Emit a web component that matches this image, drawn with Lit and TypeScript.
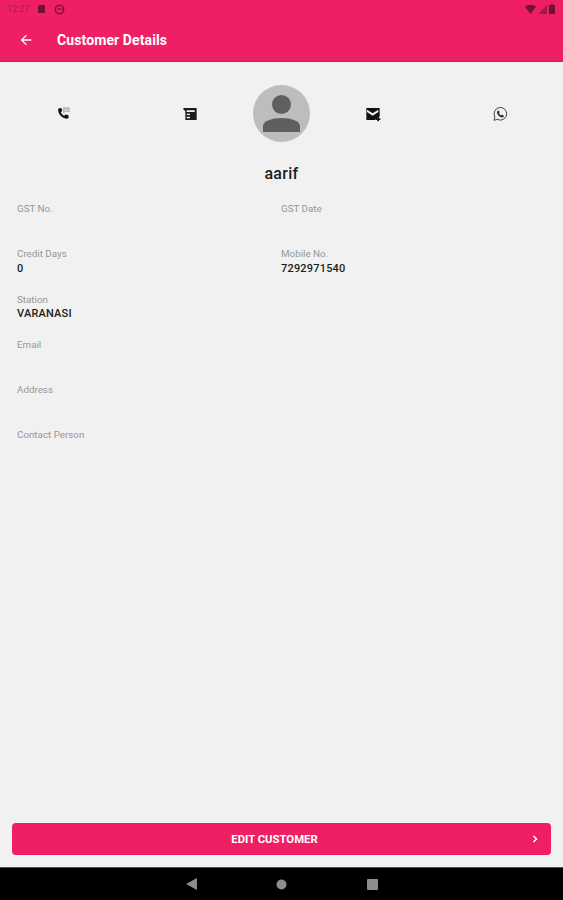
import { LitElement, html, css, svg } from "lit";
import { customElement } from "lit/decorators.js";

const fields = [
  { label: "GST No.", value: "" },
  { label: "GST Date", value: "" },
  { label: "Credit Days", value: "0" },
  { label: "Mobile No.", value: "7292971540" },
  { label: "Station", value: "VARANASI", full: true },
  { label: "Email", value: "", full: true },
  { label: "Address", value: "", full: true },
  { label: "Contact Person", value: "", full: true },
];

const phoneIcon = svg`<svg width="16" height="16" viewBox="0 0 24 24">
  <path fill="#111" d="M6.600 3.200 9.600 3l1.200 4.600-2.100 1.900c.9 2.200 2.900 4.300 5.100 5.300l2-2.100 4.600 1.300-.2 3.200c-.1 1-.9 1.800-2 1.800C10.500 18.700 4.800 12.500 4.700 5.200c0-1 .8-1.900 1.900-2z"/>
  <path fill="#b4b4b4" d="M12 2h10v7h-7l-3 2.500z"/>
  <path fill="#e6e6e6" d="M14 4h6v1h-6zM14 6h6v1h-6z"/>
</svg>`;

const archiveIcon = svg`<svg width="16" height="16" viewBox="0 0 24 24">
  <path fill="#1a1a1a" d="M2 3h20v18H5V8L2 5z"/>
  <path fill="#f1f1f1" d="M7 6.500h12v2.500H7zM7 11.500h5v2H7zM7 16h5v2.500H7z"/>
</svg>`;

const mailIcon = svg`<svg width="16" height="16" viewBox="0 0 24 24">
  <path fill="#111" d="M2 3h20v13h-3v3h-3v2H2z"/>
  <path fill="#f1f1f1" d="M3 5.500l8.500 5.500L20 5.500v3.500l-8.500 5.500L3 9z"/>
  <path fill="#111" d="M18.500 15.500h2.500v3h2v2.500h-2v2h-2.500v-2h-2v-2.500h2z"/>
</svg>`;

const whatsappIcon = svg`<svg width="16" height="16" viewBox="0 0 24 24">
  <path fill="none" stroke="#444" stroke-width="1.500" d="M3 21.500l1.400-5A9.500 9.500 0 1 1 8 20z"/>
  <path fill="#333" d="M8.800 6.800h1.500l1.200 2.800-1 1.400c.7 1.300 1.800 2.300 3 3l1.400-1 2.700 1.300v1.500c-.5 1.200-1.800 1.800-3.200 1.500-3.500-.9-6.200-3.700-7-7-.2-1.300.4-2.900 2.400-3.500z"/>
</svg>`;

@customElement("app-root")
export class AppRoot extends LitElement {
  static styles = css`
    :host {
      display: block;
      font-family: Roboto, "Liberation Sans", sans-serif;
    }

    .page {
      display: flex;
      flex-direction: column;
      height: 900px;
      background-color: #f1f1f1;
    }

    .header {
      height: 61px;
      background-color: #ee1f63;
      border-bottom: 1px solid #d81b5a;
      flex-shrink: 0;
    }

    .status {
      display: flex;
      align-items: center;
      height: 18px;
      padding: 0 7px;
      color: #a81c4e;
      font-size: 9px;
      gap: 8px;
    }

    .status-right {
      display: flex;
      align-items: center;
      gap: 2px;
      margin-left: auto;
      padding-right: 1px;
    }

    .toolbar {
      display: flex;
      align-items: center;
      height: 43px;
      padding-left: 18px;
      color: white;
    }

    .toolbar-title {
      margin-left: 23px;
      font-size: 14px;
      font-weight: 700;
      letter-spacing: 0.1px;
    }

    .actions {
      display: grid;
      grid-template-columns: 1fr 1fr 57px 1fr 1fr;
      align-items: center;
      justify-items: center;
      margin-top: 23px;
    }

    .actions svg {
      display: block;
    }

    .avatar {
      width: 57px;
      height: 57px;
      border-radius: 50%;
      background-color: #bdbdbd;
    }

    .name {
      margin-top: 22px;
      text-align: center;
      font-size: 16px;
      line-height: 20px;
      font-weight: 500;
      letter-spacing: 0.3px;
      color: #1c1c1c;
    }

    .fields {
      display: grid;
      grid-template-columns: 264px 1fr;
      grid-auto-rows: 45.25px;
      padding-left: 17px;
      margin-top: 18px;
    }

    .field.full {
      grid-column: 1 / -1;
    }

    .label {
      font-size: 9.800px;
      line-height: 14px;
      color: #969696;
    }

    .value {
      margin-top: 0.5px;
      font-size: 11px;
      line-height: 14px;
      font-weight: 500;
      letter-spacing: 0.2px;
      color: #1c1c1c;
    }

    .spacer {
      flex: 1;
    }

    .edit-button {
      display: flex;
      align-items: center;
      height: 32px;
      margin: 0 12px 12px;
      padding: 0;
      border: none;
      border-radius: 4px;
      background-color: #ee1f63;
      color: white;
      font-family: inherit;
      font-size: 11.300px;
      font-weight: 700;
    }

    .edit-label {
      flex: 1;
      padding-left: 5px;
      text-align: center;
    }

    .chevron {
      margin-right: 13px;
    }

    .nav {
      display: flex;
      align-items: center;
      justify-content: center;
      gap: 79.500px;
      height: 33px;
      box-sizing: border-box;
      background-color: black;
      border-top: 1px solid #555;
      flex-shrink: 0;
    }

    .nav svg {
      display: block;
    }
  `;

  render() {
    return html`
      <div class="page">
        <div class="header">
          <div class="status">
            <span>12:27</span>
            <svg width="9" height="10" viewBox="0 0 9 10"><path fill="#6e1238" d="M2 1h6v8H1V3z"/></svg>
            <svg width="11" height="11" viewBox="0 0 11 11">
              <circle cx="5.500" cy="5.500" r="4.200" fill="none" stroke="#6e1238" stroke-width="1.300"/>
              <path fill="none" stroke="#6e1238" d="M3 6l2-2 1.500 2L8.500 4"/>
            </svg>
            <div class="status-right">
              <svg width="11" height="9" viewBox="0 0 11 9"><path fill="#6e1238" d="M0 1.500C3-.5 8-.5 11 1.500L5.500 9z"/></svg>
              <svg width="9" height="9" viewBox="0 0 9 9"><path fill="#a01a4c" d="M9 0v9H0z"/></svg>
              <svg width="6" height="10" viewBox="0 0 6 10"><path fill="#6e1238" d="M2 0h2v1h2v9H0V1h2z"/></svg>
            </div>
          </div>
          <div class="toolbar">
            <svg width="16" height="16" viewBox="0 0 24 24"><path fill="white" d="M20 11H7.800l5.600-5.600L12 4l-8 8 8 8 1.400-1.400L7.800 13H20z"/></svg>
            <span class="toolbar-title">Customer Details</span>
          </div>
        </div>

        <div class="actions">
          ${phoneIcon} ${archiveIcon}
          <svg class="avatar" viewBox="0 0 57 57">
            <circle cx="28.500" cy="19.500" r="9.500" fill="#5f5f5f"/>
            <path fill="#5f5f5f" d="M10 47v-6c0-5 9-8 18.500-8S47 36 47 41v6z"/>
          </svg>
          ${mailIcon} ${whatsappIcon}
        </div>

        <div class="name">aarif</div>

        <div class="fields">
          ${fields.map(
            (f) => html`
              <div class="field ${f.full ? "full" : ""}">
                <div class="label">${f.label}</div>
                <div class="value">${f.value}</div>
              </div>
            `
          )}
        </div>

        <div class="spacer"></div>

        <button class="edit-button">
          <span class="edit-label">EDIT CUSTOMER</span>
          <svg class="chevron" width="6" height="8" viewBox="0 0 6 8"><path fill="none" stroke="white" stroke-width="1.500" d="M1.500 1l3 3-3 3"/></svg>
        </button>

        <div class="nav">
          <svg width="11" height="12" viewBox="0 0 11 12"><path fill="#8c8c8c" d="M11 0v12L0 6z"/></svg>
          <svg width="11" height="11" viewBox="0 0 11 11"><circle cx="5.500" cy="5.500" r="5" fill="#8c8c8c"/></svg>
          <svg width="11" height="11" viewBox="0 0 11 11"><rect width="11" height="11" rx="1" fill="#8c8c8c"/></svg>
        </div>
      </div>
    `;
  }
}
